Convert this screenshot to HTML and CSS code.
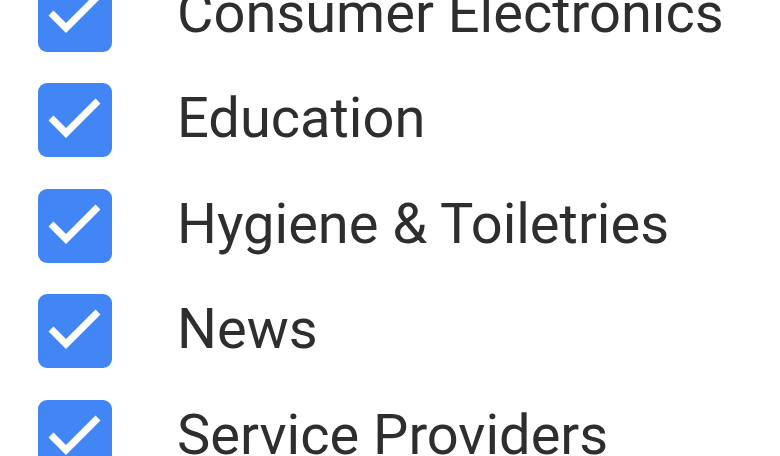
FILE: index.html
```html
<!DOCTYPE html>
<html>
<head>
<meta charset="utf-8">
<link rel="stylesheet" href="styles.css">
</head>
<body>
<ul class="list">
  <li class="row"><span class="box"><svg viewBox="0 0 74 74"><polyline points="13,35 28,50 60,18"/></svg></span><span class="label">Consumer Electronics</span></li>
  <li class="row"><span class="box"><svg viewBox="0 0 74 74"><polyline points="13,35 28,50 60,18"/></svg></span><span class="label">Education</span></li>
  <li class="row"><span class="box"><svg viewBox="0 0 74 74"><polyline points="13,35 28,50 60,18"/></svg></span><span class="label">Hygiene &amp; Toiletries</span></li>
  <li class="row"><span class="box"><svg viewBox="0 0 74 74"><polyline points="13,35 28,50 60,18"/></svg></span><span class="label">News</span></li>
  <li class="row"><span class="box"><svg viewBox="0 0 74 74"><polyline points="13,35 28,50 60,18"/></svg></span><span class="label">Service Providers</span></li>
</ul>
</body>
</html>
```
FILE: styles.css
```css
html, body {
  margin: 0;
  padding: 0;
  background: #ffffff;
  overflow: hidden;
}
.list {
  list-style: none;
  margin: -38px 0 0 0;
  padding: 0 0 0 38px;
  font-family: Roboto, "Noto Sans", sans-serif;
}
.row {
  display: flex;
  align-items: center;
  height: 105.5px;
}
.box {
  flex: none;
  width: 74px;
  height: 74px;
  border-radius: 9px;
  background: #4285f4;
  display: block;
}
.box svg {
  display: block;
  width: 74px;
  height: 74px;
}
.box polyline {
  fill: none;
  stroke: #ffffff;
  stroke-width: 7;
  stroke-linecap: butt;
  stroke-linejoin: miter;
}
.label {
  margin-left: 65px;
  margin-bottom: 4px;
  font-size: 56px;
  color: #2e2e2e;
  line-height: 1;
  white-space: nowrap;
}
```
